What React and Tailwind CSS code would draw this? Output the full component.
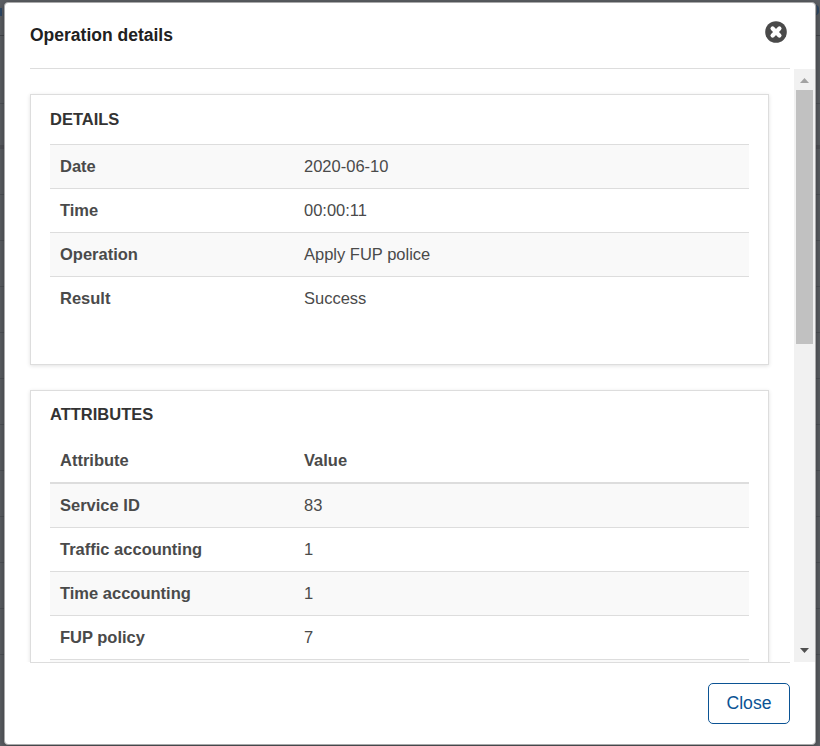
import React from "react";

const details = [
  ["Date", "2020-06-10"],
  ["Time", "00:00:11"],
  ["Operation", "Apply FUP police"],
  ["Result", "Success"],
];

const attributes = [
  ["Service ID", "83"],
  ["Traffic accounting", "1"],
  ["Time accounting", "1"],
  ["FUP policy", "7"],
];

const backdropRows = Array.from({ length: 11 }, (_, i) => i);

function Row({ label, value, striped, first }) {
  return (
    <div
      className={`flex items-center pl-[10px] text-[16.5px] ${striped ? "bg-[#f9f9f9]" : ""} ${
        first ? "h-[43px]" : "h-11 border-t border-[#dddddd]"
      }`}
    >
      <div className="w-[244px] font-bold">{label}</div>
      <div>{value}</div>
    </div>
  );
}

function Card({ title, children, className, titleClass }) {
  return (
    <section
      className={`w-[739px] shrink-0 border border-[#dddddd] px-[19px] shadow-[0_1px_4px_rgba(0,0,0,0.12)] ${className}`}
    >
      <h2 className={`text-[16.5px] leading-6 font-bold text-[#333333] ${titleClass}`}>{title}</h2>
      {children}
    </section>
  );
}

function Scrollbar() {
  return (
    <div className="flex w-[21px] shrink-0 flex-col items-center bg-[#f1f1f1]">
      <div className="flex h-[21px] items-center justify-center pt-[2px]">
        <svg width="9" height="5" viewBox="0 0 9 5" fill="#a3a3a3">
          <path d="M0 5 4.5 0 9 5z" />
        </svg>
      </div>
      <div className="h-[254px] w-[17px] bg-[#c1c1c1]" />
      <div className="mt-auto flex h-[21px] items-center justify-center pb-[2px]">
        <svg width="9" height="5" viewBox="0 0 9 5" fill="#505050">
          <path d="M0 0h9L4.5 5z" />
        </svg>
      </div>
    </div>
  );
}

/* Dimmed page behind the dialog: only its outermost pixels stay visible. */
function Backdrop() {
  return (
    <div className="absolute inset-0 overflow-hidden bg-[#5d6065]">
      <div className="flex h-[35px] justify-between">
        <div className="mt-2 h-2 w-[2px] bg-[#2f4a68]" />
        <div className="mt-[5px] mr-[1px] h-[10px] w-[4px] rounded-r-full border-r-2 border-[#2f4a68]" />
      </div>
      <div className="h-[68px] border-t border-[#45484d]" />
      <div className="h-[42px] border-t border-[#505358]" />
      <div className="h-[49px] border-t-4 border-[#525459]" />
      {backdropRows.map((i) => (
        <div key={i} className="h-[46px] border-t border-[#505358]" />
      ))}
    </div>
  );
}

export default function App() {
  return (
    <div className="relative h-[746px] w-[820px] overflow-hidden pt-[2px] pl-1 font-['Liberation_Sans',Arial,sans-serif] text-[#4a4a4a]">
      <Backdrop />
      <div className="relative flex h-[743px] w-[812px] flex-col overflow-hidden rounded-[4px] border border-[#a9a9aa] bg-white shadow-[0_2px_8px_rgba(0,0,0,0.4)]">
        <header className="mr-[25px] ml-[25px] flex h-[66px] shrink-0 justify-between border-b border-[#dddddd]">
          <h1 className="pt-5 text-[17.5px] leading-6 font-bold text-[#212121]">Operation details</h1>
          <button className="mt-[18px] mr-[3px] size-[22px]" aria-label="Close dialog">
            <svg width="22" height="22" viewBox="0 0 22 22">
              <circle cx="11" cy="11" r="10.8" fill="#4a4a4a" />
              <path
                d="m7.6 7.6 6.8 6.8m0-6.8-6.8 6.8"
                stroke="#fff"
                strokeWidth="4.3"
                strokeLinecap="round"
              />
            </svg>
          </button>
        </header>
        <div className="flex h-[593px] shrink-0">
          <div className="flex w-[789px] flex-col overflow-hidden pt-[25px] pl-[25px]">
            <Card title="DETAILS" className="h-[271px]" titleClass="h-[49px] pt-[12px]">
              {details.map(([label, value], i) => (
                <Row key={label} label={label} value={value} striped={i % 2 === 0} />
              ))}
            </Card>
            <Card title="ATTRIBUTES" className="mt-[25px] h-[400px]" titleClass="h-[48px] pt-[11px]">
              <div className="flex h-[45px] items-center border-b-2 border-[#dddddd] pl-[10px] text-[16.5px] font-bold">
                <div className="w-[244px]">Attribute</div>
                <div>Value</div>
              </div>
              {attributes.map(([label, value], i) => (
                <Row key={label} label={label} value={value} striped={i % 2 === 0} first={i === 0} />
              ))}
              <div className="h-11 border-t border-[#dddddd] bg-[#f9f9f9]" />
            </Card>
          </div>
          <Scrollbar />
        </div>
        <footer className="mr-[25px] ml-[25px] flex grow justify-end border-t border-[#dddddd] pt-5">
          <button className="h-[41px] w-[82px] rounded-[5px] border border-[#0b5394] text-[17.6px] text-[#0b5394]">
            Close
          </button>
        </footer>
      </div>
    </div>
  );
}
